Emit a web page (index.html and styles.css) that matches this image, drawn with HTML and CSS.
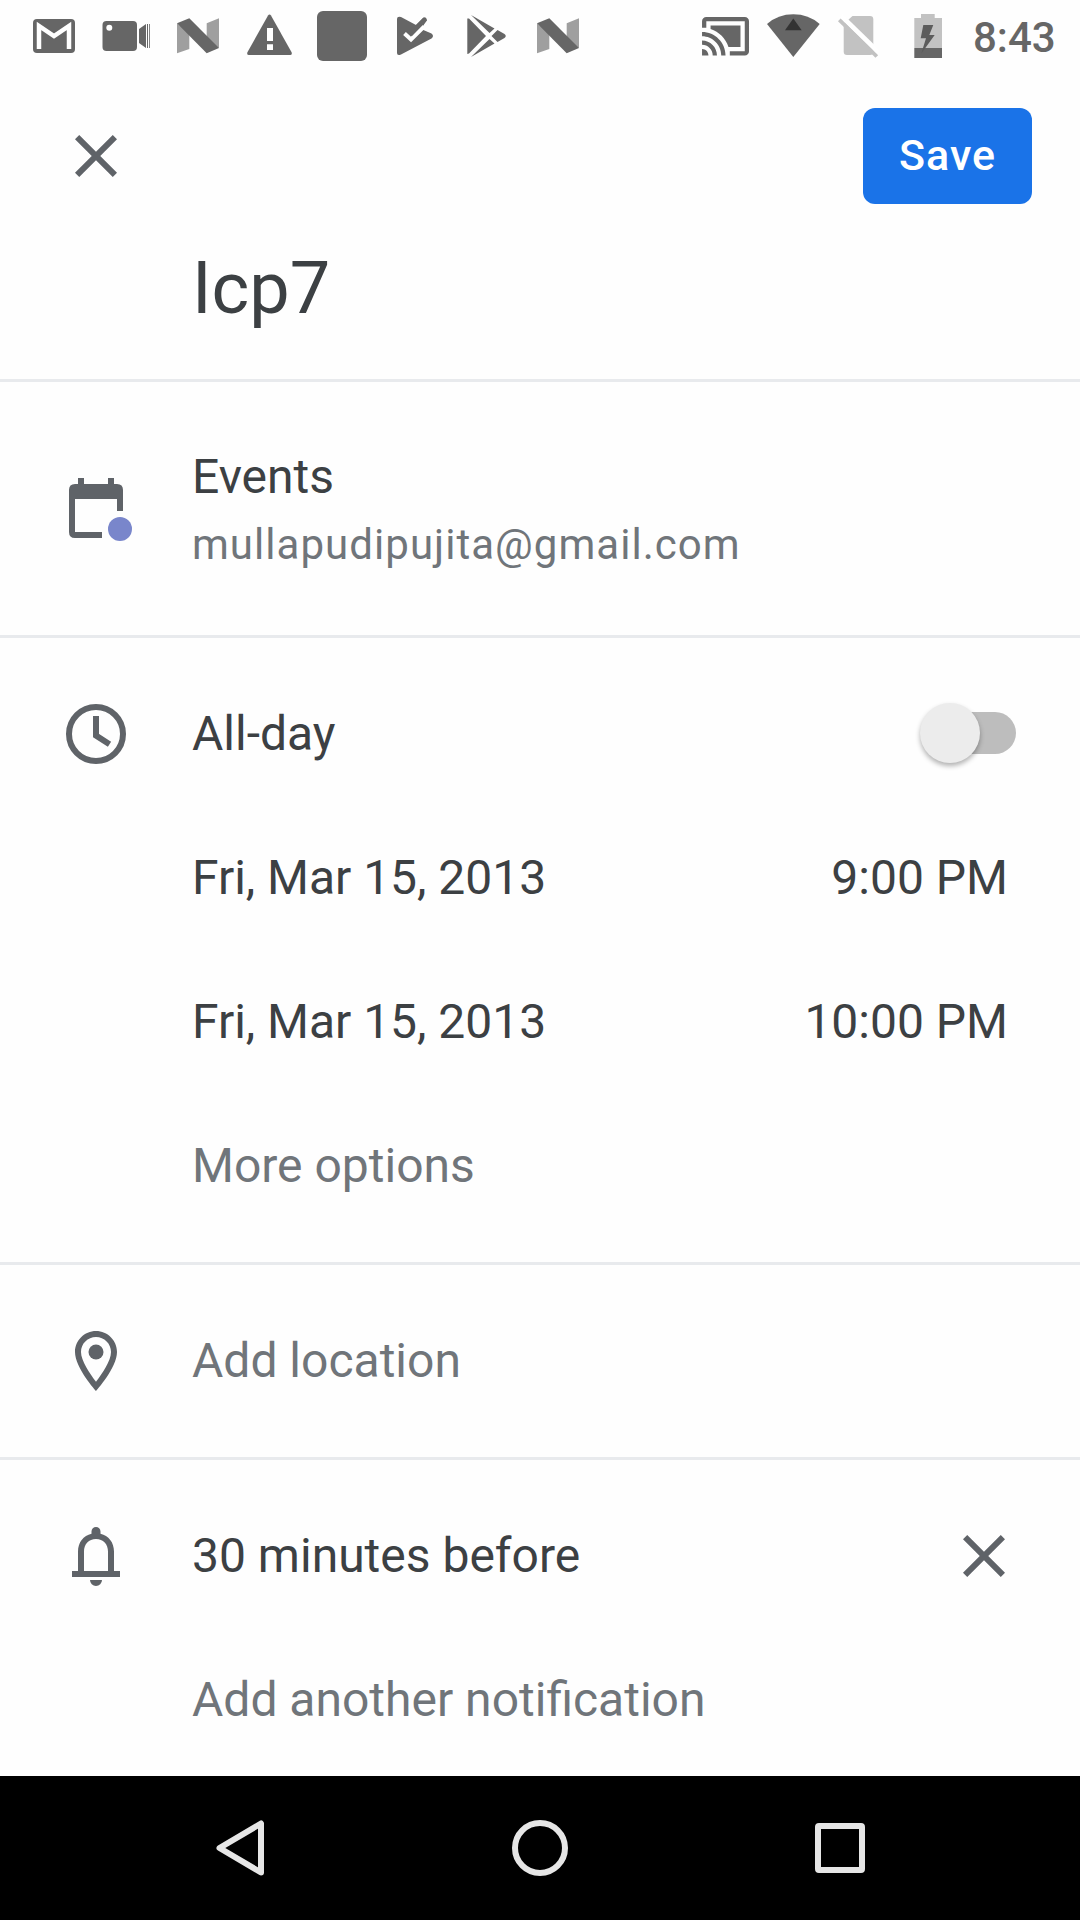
FILE: index.html
```html
<!DOCTYPE html>
<html lang="en">
<head>
<meta charset="utf-8">
<title>Edit event</title>
<link rel="stylesheet" href="styles.css">
</head>
<body>
<div class="screen">
  <div class="status">
    <svg class="slot" viewBox="0 0 72 72"><rect x="15" y="19" width="42" height="34" rx="4"/><path class="line-white" d="M21 49V26L36 36L51 26V49" stroke-width="4.5"/></svg>
    <svg class="slot" viewBox="0 0 72 72"><rect x="12.5" y="21" width="34.5" height="30" rx="4"/><circle cx="19.3" cy="27.7" r="3" fill="#fff"/><path d="M49 29l7-5v24l-7-5zM57 24h1v24h-1zM59 24h.8v24H59z"/></svg>
    <svg class="slot" viewBox="0 0 72 72"><path class="mid" d="M15 23.3L27.3 33V49L15 53.3zM44.7 23.3L57 18.3V48L44.7 40z"/><path d="M15 23.3L27.3 18.3L57 48L44.7 53.3z"/></svg>
    <svg class="slot" viewBox="0 0 72 72"><path d="M34 15.5q1.500-2 3 0L57.700 52.500q.5 2.500-1.500 2.500H14.800q-2 0-1.500-2.500z"/><path d="M33 28h6v13h-6zM33 44.300h6v5.700h-6z" fill="#fff"/></svg>
    <svg class="slot" viewBox="0 0 72 72"><rect x="11" y="11" width="50" height="50" rx="6"/></svg>
    <svg class="slot" viewBox="0 0 72 72"><path d="M19 19q0-3 4-2L38 25L45 18Q48 16 49 20L43 29L53.500 33.500Q56.500 36 53.500 38.500L23 54.500Q19 56 19 53z"/><path class="line-white" d="M26.500 33.500L33 39.500L46 26.500" stroke-width="4"/><path d="M38 25L45.500 17.500L49 20.500L34 36L31 32z"/></svg>
    <svg class="slot" viewBox="0 0 72 72"><path d="M17.300 18.500L19 18.500L36 36L19 53.500L17.300 54zM21 15L44.500 28.500L39.500 33zM21 57L44.500 43.500L39.500 39zM47.500 30L54.500 34Q57 36 54.500 38L47.500 42L41.500 36z"/></svg>
    <svg class="slot" viewBox="0 0 72 72"><path class="mid" d="M15 23.300L27.300 33V49L15 53.300zM44.700 23.300L57 18.300V48L44.700 40z"/><path d="M15 23.300L27.300 18.300L57 48L44.700 53.300z"/></svg>
    <div class="system">
      <svg class="slot-sm" viewBox="0 0 68 72"><path transform="translate(9.900 10.600) scale(2.136)" d="M1 18v3h3c0-1.660-1.340-3-3-3zm0-4v2c2.760 0 5 2.240 5 5h2c0-3.870-3.130-7-7-7zm18-7H5v1.630c3.960 1.280 7.090 4.410 8.370 8.370H19V7zM1 10v2c4.970 0 9 4.030 9 9h2c0-6.080-4.930-11-11-11zm20-7H3c-1.100 0-2 .9-2 2v3h2V5h18v14h-7v2h7c1.100 0 2-.9 2-2V5c0-1.100-.9-2-2-2z"/></svg>
      <svg class="slot-sm" viewBox="0 0 68 72"><path d="M9 24Q20 14.300 35.300 14.300T61.700 24L35.300 57z"/><path d="M27 30.300L35.300 18.500L43.700 30.300z" fill="#333"/></svg>
      <svg class="slot-sm" viewBox="0 0 68 72"><path class="light" d="M26.500 16H44q3.300 0 3.300 3.300V51.500q0 3.500-3.300 3.500H21q-3.300 0-3.300-3.300V24z"/><path class="line-white" d="M15 15.700L53 52.700" stroke-width="5"/><path d="M13.300 19.800L50.800 56.500" fill="none" stroke="#c2c2c2" stroke-width="3.800"/></svg>
      <svg class="slot-sm" viewBox="0 0 68 72"><path class="light" d="M27 14h13.700v4H48v30H20.300V18H27z"/><path d="M20.300 48H48v10H20.300z"/><path fill="#5c5c5c" d="M29.300 25h10l-4 10h5.400L27.300 53.500L32 38.300h-5.300z"/></svg>
      <span class="time">8:43</span>
    </div>
  </div>

  <header class="toolbar">
    <svg class="icon" viewBox="0 0 24 24"><path d="M19 6.410L17.590 5 12 10.590 6.410 5 5 6.410 10.590 12 5 17.590 6.410 19 12 13.410 17.590 19 19 17.590 13.410 12z"/></svg>
    <button class="save">Save</button>
  </header>
  <h1 class="title">Icp7</h1>

  <section class="section account">
    <svg class="icon" viewBox="0 0 24 24"><path d="M19 13V9H5v11h9v2H5q-2 0-2-2V6q0-2 2-2h1V2h2v2h8V2h2v2h1q2 0 2 2v7z"/><circle cx="20" cy="19" r="4" fill="#7986cb"/></svg>
    <div class="account-text">
      <div class="name">Events</div>
      <div class="email">mullapudipujita@gmail.com</div>
    </div>
  </section>

  <section class="section">
    <div class="row">
      <svg class="icon" viewBox="0 0 24 24"><circle class="outline" cx="12" cy="12" r="9"/><path class="outline" d="M12 6v6.500l4.500 2.900"/></svg>
      <span class="label">All-day</span>
      <span class="switch"><span class="thumb"></span></span>
    </div>
    <div class="row"><span class="label date">Fri, Mar 15, 2013</span><span>9:00 PM</span></div>
    <div class="row"><span class="label date">Fri, Mar 15, 2013</span><span>10:00 PM</span></div>
    <div class="row muted"><span class="label">More options</span></div>
  </section>

  <section class="section">
    <div class="row muted">
      <svg class="icon" viewBox="0 0 24 24"><path d="M12 2C8.130 2 5 5.130 5 9c0 5.250 7 13 7 13s7-7.750 7-13c0-3.870-3.130-7-7-7zM7 9c0-2.760 2.240-5 5-5s5 2.240 5 5c0 2.880-2.880 7.190-5 9.880C9.920 16.210 7 11.850 7 9z"/><circle cx="12" cy="9" r="2.500"/></svg>
      <span class="label">Add location</span>
    </div>
  </section>

  <section class="section last">
    <div class="row">
      <svg class="icon" viewBox="0 0 24 24"><path d="M4 17h2v-6.500c0-3 1.800-5.300 4.500-5.900V3.800a1.500 1.500 0 0 1 3 0v.8c2.700.6 4.500 2.900 4.500 5.900V17h2v2H4zM8 17h8v-6.500c0-2.500-1.600-4.200-4-4.200s-4 1.700-4 4.200zM10 20h4a2 2 0 0 1-4 0z"/></svg>
      <span class="label">30 minutes before</span>
      <svg class="icon remove" viewBox="0 0 24 24"><path d="M19 6.410L17.590 5 12 10.590 6.410 5 5 6.410 10.590 12 5 17.590 6.410 19 12 13.410 17.590 19 19 17.590 13.410 12z"/></svg>
    </div>
    <div class="row muted"><span class="label">Add another notification</span></div>
  </section>

  <nav class="nav">
    <svg class="nav-icon" viewBox="0 0 72 72"><path d="M57 11.500V60.500L15.500 36z"/></svg>
    <svg class="nav-icon" viewBox="0 0 72 72"><circle cx="36" cy="36" r="25"/></svg>
    <svg class="nav-icon" viewBox="0 0 72 72"><rect x="14" y="14" width="44" height="44" rx="1"/></svg>
  </nav>
</div>
</body>
</html>
```
FILE: styles.css
```css
* { box-sizing: border-box; }
body { margin: 0; background: #fefefe; }
.screen {
  width: 1080px;
  height: 1920px;
  display: flex;
  flex-direction: column;
  font: 400 48px/56px Roboto, sans-serif;
  color: #3c4043;
  overflow: hidden;
}
svg { display: block; flex: none; }

.status { height: 72px; padding-left: 18px; display: flex; flex: none; fill: #666; }
.slot { width: 72px; height: 72px; }
.slot-sm { width: 68px; height: 72px; }
.mid { fill: #9f9f9f; }
.light { fill: #c2c2c2; }
.line-white { fill: none; stroke: #fff; }
.system { margin-left: 96px; display: flex; }
.time { margin-left: 11px; font-size: 42px; font-weight: 500; line-height: 76px; color: #666; }

.toolbar {
  height: 168px;
  padding: 0 48px 0 60px;
  display: flex;
  flex: none;
  align-items: center;
  justify-content: space-between;
}
.icon { width: 72px; height: 72px; fill: #5f6368; }
.outline { fill: none; stroke: #5f6368; stroke-width: 2; }
.save {
  width: 169px;
  height: 96px;
  padding: 0 0 2px;
  border: 0;
  border-radius: 12px;
  background: #1a73e8;
  color: #fff;
  font: 500 43px/94px Roboto, sans-serif;
  letter-spacing: 1px;
}
.title {
  flex: none;
  height: 139px;
  margin: 0;
  padding: 7px 0 0 192px;
  font-size: 72px;
  font-weight: 400;
  line-height: 84px;
}

.section { flex: none; padding: 24px 0; border-top: 3px solid #e8eaed; }
.section.account { height: 256px; padding: 0 60px 2px; display: flex; align-items: center; gap: 60px; }
.section.last { padding-bottom: 0; }
.account-text { padding-top: 4px; }
.email { margin-top: 15px; font-size: 42px; line-height: 50px; color: #70757a; letter-spacing: 1.04px; }
.row { height: 144px; padding: 0 72px 0 60px; display: flex; align-items: center; }
.label { flex: 1; margin-left: 60px; }
.label:first-child { margin-left: 132px; }
.date { letter-spacing: -.03px; }
.muted { color: #70757a; }
.remove { margin-right: -12px; }

.switch {
  width: 84px;
  height: 42px;
  margin: 0 -8px 2px 0;
  display: flex;
  align-items: center;
  border-radius: 21px;
  background: #bdbdbd;
}
.thumb {
  width: 60px;
  height: 60px;
  margin-left: -12px;
  border-radius: 50%;
  background: #ececec;
  box-shadow: 0 3px 5px rgba(0, 0, 0, .3);
}

.nav {
  height: 144px;
  margin-top: auto;
  padding: 0 204px;
  display: flex;
  flex: none;
  align-items: center;
  justify-content: space-between;
  background: #000;
}
.nav-icon { width: 72px; height: 72px; fill: none; stroke: #e6e6e6; stroke-width: 6; stroke-linejoin: round; }
```
